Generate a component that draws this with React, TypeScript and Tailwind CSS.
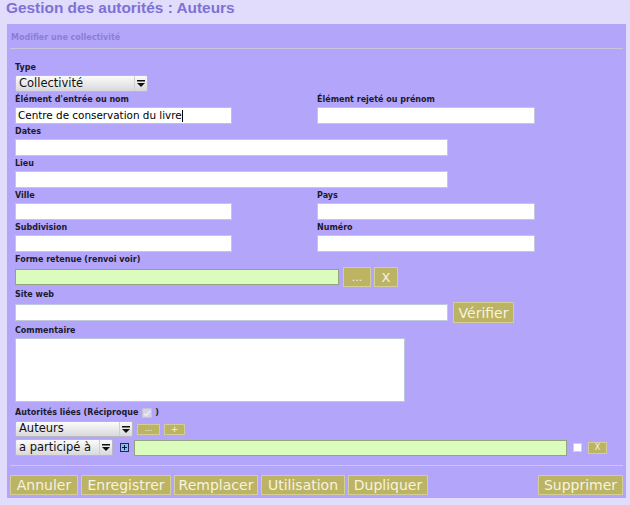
import React from "react"

const Label = ({ children }: { children: React.ReactNode }) => (
  <div className="h-[15px] text-[8px] leading-[15px] font-bold text-[#1c1a2c] whitespace-nowrap">{children}</div>
)

interface BoxProps {
  className: string
}

const TextBox = ({ className }: BoxProps) => (
  <input readOnly className={`block h-[17px] bg-white border border-[#c2c8dc] outline-none ${className}`} />
)

const GreenBox = ({ className }: BoxProps) => (
  <input readOnly className={`block bg-[#dafcbc] border border-[#95a37f] outline-none ${className}`} />
)

const Arrow = () => (
  <svg width="8" height="7" viewBox="0 0 8 7">
    <rect x="0" y="0" width="8" height="1.5" fill="#111" />
    <polygon points="0,3 8,3 4,7" fill="#111" />
  </svg>
)

interface SelectProps {
  label: string
  className: string
}

const Select = ({ label, className }: SelectProps) => (
  <div
    className={`flex items-stretch border border-[#b9b9c6] rounded-[2px] bg-gradient-to-b from-[#fbfbfb] to-[#d9d9dc] text-[11.5px] text-[#111] ${className}`}
  >
    <div className="flex-1 flex items-center pl-[3px] whitespace-nowrap">{label}</div>
    <div className="w-[13px] flex items-center justify-center border-l border-[#cfcfd6]">
      <Arrow />
    </div>
  </div>
)

interface BtnProps {
  children: React.ReactNode
  className: string
}

const Btn = ({ children, className }: BtnProps) => (
  <button
    className={`flex items-center justify-center bg-[#bcb462] border border-[#d3cd97] text-[#f6f3e0] leading-none ${className}`}
  >
    {children}
  </button>
)

const App = () => {
  return (
    <div className="w-[630px] h-[505px] bg-[#e1dcfc] font-['DejaVu_Sans',sans-serif] overflow-hidden">
      <h1 className="h-[24px] pl-[6px] text-[15.4px] leading-[16px] font-bold text-[#7d71d4] font-['Liberation_Sans',Arial,sans-serif]">
        Gestion des autorités : Auteurs
      </h1>
      <div className="ml-[7px] w-[619px] h-[474px] bg-[#b3a6fa] flex flex-col">
        <div className="h-[24px] pt-[8px] pl-[4px] text-[8px] leading-[12px] font-bold text-[#8a7ed8]">
          Modifier une collectivité
        </div>
        <div className="mx-[3px] h-px bg-[#cac5dc]" />

        <div className="px-[8px] pt-[11px] flex flex-col">
          <Label>Type</Label>
          <Select label="Collectivité" className="w-[133px] h-[17px]" />

          <div className="flex">
            <div className="w-[302px]">
              <Label>Élément d'entrée ou nom</Label>
              <div className="w-[217px] h-[17px] bg-white border border-[#f0c24e] flex items-center pl-[2px] text-[10.4px] text-black whitespace-nowrap">
                Centre de conservation du livre
                <span className="inline-block w-px h-[12px] bg-black" />
              </div>
            </div>
            <div>
              <Label>Élément rejeté ou prénom</Label>
              <TextBox className="w-[218px]" />
            </div>
          </div>

          <Label>Dates</Label>
          <TextBox className="w-[433px]" />
          <Label>Lieu</Label>
          <TextBox className="w-[433px]" />

          <div className="flex">
            <div className="w-[302px]">
              <Label>Ville</Label>
              <TextBox className="w-[217px]" />
            </div>
            <div>
              <Label>Pays</Label>
              <TextBox className="w-[218px]" />
            </div>
          </div>
          <div className="flex">
            <div className="w-[302px]">
              <Label>Subdivision</Label>
              <TextBox className="w-[217px]" />
            </div>
            <div>
              <Label>Numéro</Label>
              <TextBox className="w-[218px]" />
            </div>
          </div>

          <Label>Forme retenue (renvoi voir)</Label>
          <div className="flex items-center h-[20px]">
            <GreenBox className="w-[324px] h-[16px]" />
            <Btn className="ml-[4px] w-[28px] h-[20px] text-[11px]">...</Btn>
            <Btn className="ml-[3px] w-[24px] h-[20px] text-[13px]">X</Btn>
          </div>

          <Label>Site web</Label>
          <div className="flex items-center h-[21px]">
            <TextBox className="w-[433px]" />
            <Btn className="ml-[5px] w-[61px] h-[21px] text-[14px]">Vérifier</Btn>
          </div>

          <Label>Commentaire</Label>
          <textarea readOnly className="block w-[390px] h-[64px] bg-white border border-[#b9c8dc] outline-none resize-none" />

          <div className="h-[19px] pt-[3px] flex items-center text-[8px] font-bold text-[#1c1a2c] whitespace-nowrap">
            Autorités liées (Réciproque
            <span className="ml-[4px] mr-[3px] w-[10px] h-[10px] bg-[#d4d2e4] border border-[#c4c2d6] rounded-[1px] flex items-center justify-center">
              <svg width="8" height="7" viewBox="0 0 8 7">
                <polyline points="1,3.5 3,5.5 7,1" fill="none" stroke="#eeeef6" strokeWidth="1.4" />
              </svg>
            </span>
            )
          </div>

          <div className="flex items-center h-[16px]">
            <Select label="Auteurs" className="w-[118px] h-[16px]" />
            <Btn className="ml-[4px] w-[23px] h-[11px] text-[8px]">...</Btn>
            <Btn className="ml-[4px] w-[21px] h-[11px] text-[9px]">+</Btn>
          </div>

          <div className="mt-[2px] flex items-center h-[17px]">
            <Select label="a participé à" className="w-[98px] h-[17px]" />
            <span className="ml-[7px] w-[9px] h-[9px] bg-[#8cb9f2] border border-[#1d2a55] flex items-center justify-center">
              <svg width="7" height="7" viewBox="0 0 7 7">
                <rect x="3" y="1" width="1" height="5" fill="#0d1530" />
                <rect x="1" y="3" width="5" height="1" fill="#0d1530" />
              </svg>
            </span>
            <GreenBox className="ml-[5px] w-[433px] h-[16px]" />
            <span className="ml-[6px] w-[9px] h-[9px] bg-white border border-[#d0d0dc]" />
            <Btn className="ml-[6px] w-[19px] h-[12px] text-[8px]">X</Btn>
          </div>
        </div>

        <div className="mt-[9px] mx-[3px] h-px bg-[#cdc6ef]" />

        <div className="mt-[9px] px-[3px] flex text-[14px]">
          <div className="flex gap-[3px]">
            <Btn className="w-[68px] h-[20px]">Annuler</Btn>
            <Btn className="w-[90px] h-[20px]">Enregistrer</Btn>
            <Btn className="w-[84px] h-[20px]">Remplacer</Btn>
            <Btn className="w-[84px] h-[20px]">Utilisation</Btn>
            <Btn className="w-[80px] h-[20px]">Dupliquer</Btn>
          </div>
          <Btn className="ml-auto w-[85px] h-[20px]">Supprimer</Btn>
        </div>
      </div>
    </div>
  )
}

export default App
